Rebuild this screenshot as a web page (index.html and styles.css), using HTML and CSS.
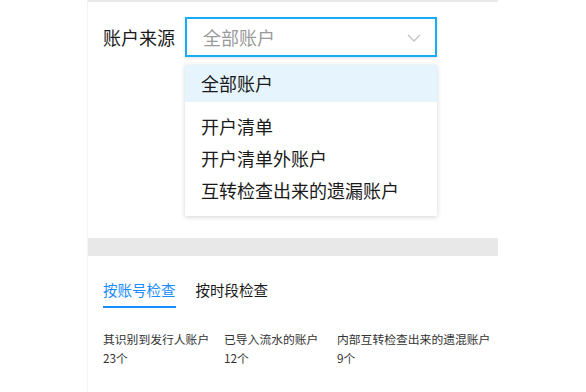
FILE: index.html
```html
<!DOCTYPE html>
<html lang="zh">
<head>
<meta charset="utf-8">
<link rel="stylesheet" href="styles.css">
</head>
<body>
<div class="panel">
  <section class="filter">
    <div class="field">
      <span class="label">账户来源</span>
      <div class="select-wrap">
        <div class="select">
          <span class="placeholder">全部账户</span>
          <svg class="chev" width="14" height="8" viewBox="0 0 14 8"><path d="M1 1 L7 7 L13 1" fill="none" stroke="#c4c4c4" stroke-width="1.3"/></svg>
        </div>
        <ul class="menu">
          <li class="item active">全部账户</li>
          <li class="item first">开户清单</li>
          <li class="item">开户清单外账户</li>
          <li class="item">互转检查出来的遗漏账户</li>
        </ul>
      </div>
    </div>
  </section>
  <div class="band"></div>
  <section class="checks">
    <div class="tabs">
      <span class="tab on">按账号检查</span>
      <span class="tab">按时段检查</span>
    </div>
    <div class="stats">
      <div class="stat s1"><div>其识别到发行人账户</div><div>23个</div></div>
      <div class="stat s2"><div>已导入流水的账户</div><div>12个</div></div>
      <div class="stat"><div>内部互转检查出来的遗混账户</div><div>9个</div></div>
    </div>
  </section>
</div>
</body>
</html>
```
FILE: styles.css
```css
* { box-sizing: border-box; }
html, body { margin: 0; padding: 0; background: #fff; }
body {
  font-family: "Noto Sans CJK SC", "Noto Sans", sans-serif;
  color: #222;
  width: 586px;
  height: 392px;
  overflow: hidden;
}
.panel {
  margin-left: 87px;
  width: 411px;
  height: 392px;
  border-top: 2px solid #e8e8e8;
  border-left: 1px solid #f4f4f4;
}
.filter {
  height: 236px;
  padding: 15px 0 0 15px;
}
.field {
  display: flex;
  align-items: center;
}
.label {
  font-size: 18px;
  line-height: 40px;
  color: #1a1a1a;
  width: 72px;
  white-space: nowrap;
}
.select-wrap {
  position: relative;
  margin-left: 10px;
}
.select {
  width: 252px;
  height: 40px;
  border: 2px solid #18abf6;
  display: flex;
  align-items: center;
  justify-content: space-between;
  padding: 0 14px 0 16px;
  box-shadow: 0 1px 3px rgba(0,0,0,0.12);
}
.placeholder {
  font-size: 18px;
  color: #9a9a9a;
}
.chev { margin-top: 1px; }
.menu {
  position: absolute;
  left: 0;
  top: 48px;
  width: 252px;
  height: 151px;
  margin: 0;
  padding: 0;
  list-style: none;
  background: #fff;
  box-shadow: 0 1px 5px rgba(0,0,0,0.18);
}
.item {
  font-size: 18px;
  line-height: 32px;
  padding-left: 16px;
  color: #1a1a1a;
}
.item.active {
  background: #e6f5fd;
  line-height: 37px;
}
.item.first { margin-top: 8px; }
.band {
  height: 18px;
  background: #e8e8e8;
}
.checks {
  padding: 23px 0 0 15px;
}
.tabs {
  display: flex;
  gap: 20px;
}
.tab {
  font-size: 14.5px;
  line-height: 22px;
  padding-bottom: 5px;
  border-bottom: 2px solid transparent;
  color: #1a1a1a;
}
.tab.on {
  color: #1a8cff;
  border-bottom-color: #1a8cff;
}
.stats {
  display: flex;
  margin-top: 21px;
  font-size: 11.8px;
  line-height: 19px;
  color: #333;
}
.s1 { width: 121px; }
.s2 { width: 113px; }
```
